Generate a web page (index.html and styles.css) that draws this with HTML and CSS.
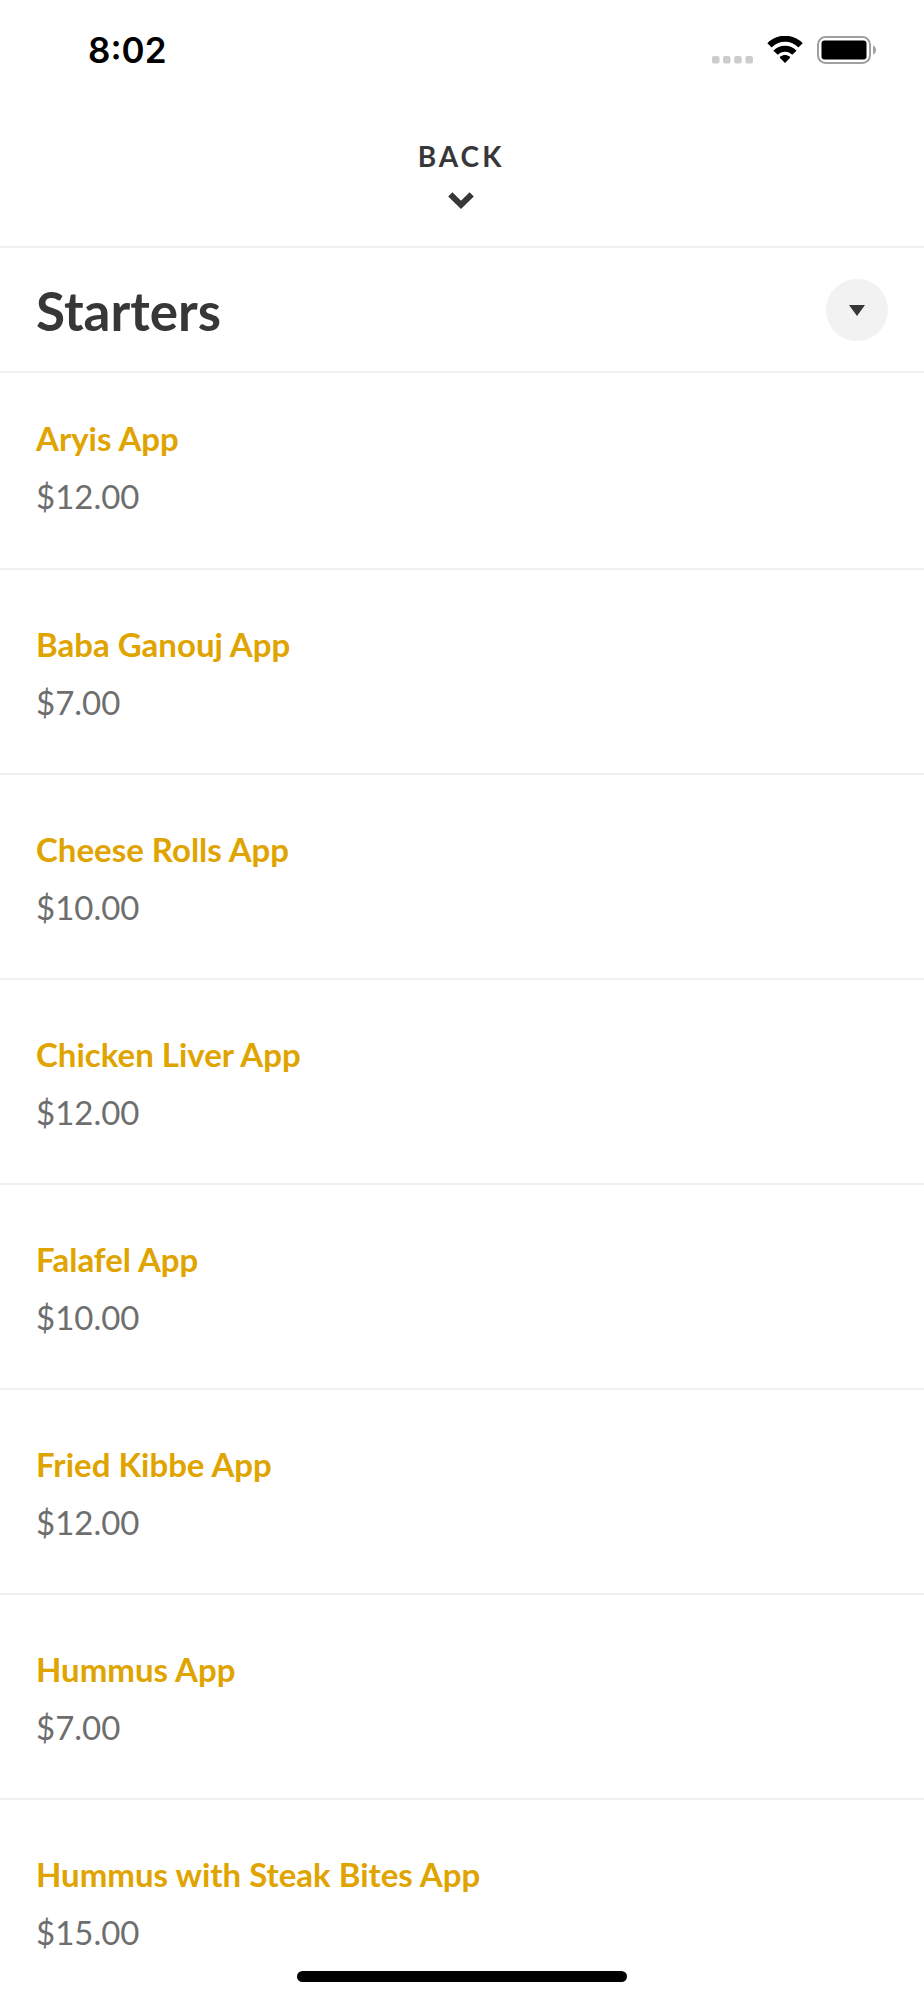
FILE: index.html
```html
<!DOCTYPE html>
<html lang="en">
<head>
    <meta charset="UTF-8">
    <meta name="viewport" content="width=device-width, initial-scale=1.0">
    <title>Starters</title>
    <link rel="stylesheet" href="styles.css">
</head>
<body>
    <div class="status-bar">
        <span class="time">8:02</span>
        <div class="status-icons">
            <svg class="signal" viewBox="0 0 41 8" width="41" height="8">
                <rect x="0" width="7.500" height="7.500" rx="2"/>
                <rect x="11" width="7.500" height="7.500" rx="2"/>
                <rect x="22.200" width="7.500" height="7.500" rx="2"/>
                <rect x="33.400" width="7.500" height="7.500" rx="2"/>
            </svg>
            <svg class="wifi" viewBox="0 0 36 28" width="36" height="28">
                <path class="wifi-arc" d="M2.500 9.300A21.500 21.500 0 0 1 33.500 9.300"/>
                <path class="wifi-arc" d="M8.600 16.800A13 13 0 0 1 27.400 16.800"/>
                <path d="M13.300 22.300c-.6-.6-.6-1.300 0-1.700 2.800-2.100 6.600-2.100 9.400 0 .6.400.6 1.100 0 1.700L18 27z"/>
            </svg>
            <svg class="battery" viewBox="0 0 60 28" width="60" height="28">
                <rect class="battery-case" x="1" y="1" width="52" height="26" rx="7.500"/>
                <rect x="4.500" y="4.500" width="45" height="19" rx="3"/>
                <path class="battery-tip" d="M56 9.500v9c2-.8 3-2.500 3-4.500s-1-3.700-3-4.500z"/>
            </svg>
        </div>
    </div>

    <header class="top-nav">
        <button type="button" class="back">
            <span class="back-label">BACK</span>
            <svg viewBox="0 0 26 17" width="26" height="17">
                <path d="M2.300 2.300L13 12.800 23.700 2.300"/>
            </svg>
        </button>
    </header>

    <main>
        <div class="section-header">
            <h1>Starters</h1>
            <button type="button" class="toggle" aria-label="Choose section">
                <svg viewBox="0 0 16 11" width="16" height="11">
                    <path d="M0 0h16L8 11z"/>
                </svg>
            </button>
        </div>

        <ul class="menu">
            <li class="menu-item"><h2>Aryis App</h2><p>$12.00</p></li>
            <li class="menu-item"><h2>Baba Ganouj App</h2><p>$7.00</p></li>
            <li class="menu-item"><h2>Cheese Rolls App</h2><p>$10.00</p></li>
            <li class="menu-item"><h2>Chicken Liver App</h2><p>$12.00</p></li>
            <li class="menu-item"><h2>Falafel App</h2><p>$10.00</p></li>
            <li class="menu-item"><h2>Fried Kibbe App</h2><p>$12.00</p></li>
            <li class="menu-item"><h2>Hummus App</h2><p>$7.00</p></li>
            <li class="menu-item"><h2>Hummus with Steak Bites App</h2><p>$15.00</p></li>
        </ul>
    </main>

    <div class="home-indicator"></div>
</body>
</html>
```

FILE: styles.css
```css
* {
    box-sizing: border-box;
}
body {
    margin: 0;
    height: 100vh;
    overflow: hidden;
    font-family: Lato, sans-serif;
    background-color: white;
    color: #373737;
}
h1, h2, p, ul {
    margin: 0;
    padding: 0;
}
button {
    border: none;
    padding: 0;
    font-family: inherit;
    color: inherit;
    cursor: pointer;
}
.status-bar {
    display: flex;
    justify-content: space-between;
    align-items: center;
    padding: 36px 47px 36px 88px;
}
.time {
    font-family: Inter, sans-serif;
    font-size: 35px;
    line-height: 28px;
    font-weight: 600;
    color: black;
}
.status-icons {
    display: flex;
    align-items: flex-end;
    gap: 14px;
}
.signal {
    fill: #ccc;
}
.wifi-arc {
    fill: none;
    stroke: black;
    stroke-width: 6;
}
.battery-case {
    fill: none;
    stroke: #a0a0a0;
    stroke-width: 2;
}
.battery-tip {
    fill: #a0a0a0;
}
.top-nav {
    display: flex;
    justify-content: center;
    padding: 39px 2px 37px 0;
    border-bottom: 2px solid #f0f0f0;
}
.back {
    display: flex;
    flex-direction: column;
    align-items: center;
    gap: 19px;
    background: none;
}
.back-label {
    font-size: 28px;
    line-height: 34px;
    font-weight: 700;
    letter-spacing: 3px;
}
.back path {
    fill: none;
    stroke: #373737;
    stroke-width: 6;
}
.section-header {
    display: flex;
    justify-content: space-between;
    align-items: center;
    padding: 31px 36px 30px;
    border-bottom: 2px solid #f0f0f0;
}
h1 {
    padding-top: 2px;
    font-size: 53px;
    line-height: 60px;
    font-weight: 700;
}
.toggle {
    display: flex;
    justify-content: center;
    align-items: center;
    width: 62px;
    height: 62px;
    border-radius: 50%;
    background-color: #f2f2f2;
}
.toggle path {
    fill: #373737;
}
.menu {
    list-style: none;
}
.menu-item {
    padding: 52px 36px 49px;
    border-bottom: 2px solid #f0f0f0;
}
.menu-item:first-child {
    padding-top: 43px;
    padding-bottom: 50px;
}
.menu-item h2 {
    font-size: 33px;
    line-height: 44px;
    font-weight: 700;
    color: #dfa400;
}
.menu-item p {
    margin-top: 14px;
    font-size: 33px;
    line-height: 44px;
    color: #6e6e6e;
}
.home-indicator {
    position: fixed;
    bottom: 18px;
    left: 50%;
    width: 330px;
    height: 11px;
    margin-left: -165px;
    border-radius: 6px;
    background-color: black;
}
```
